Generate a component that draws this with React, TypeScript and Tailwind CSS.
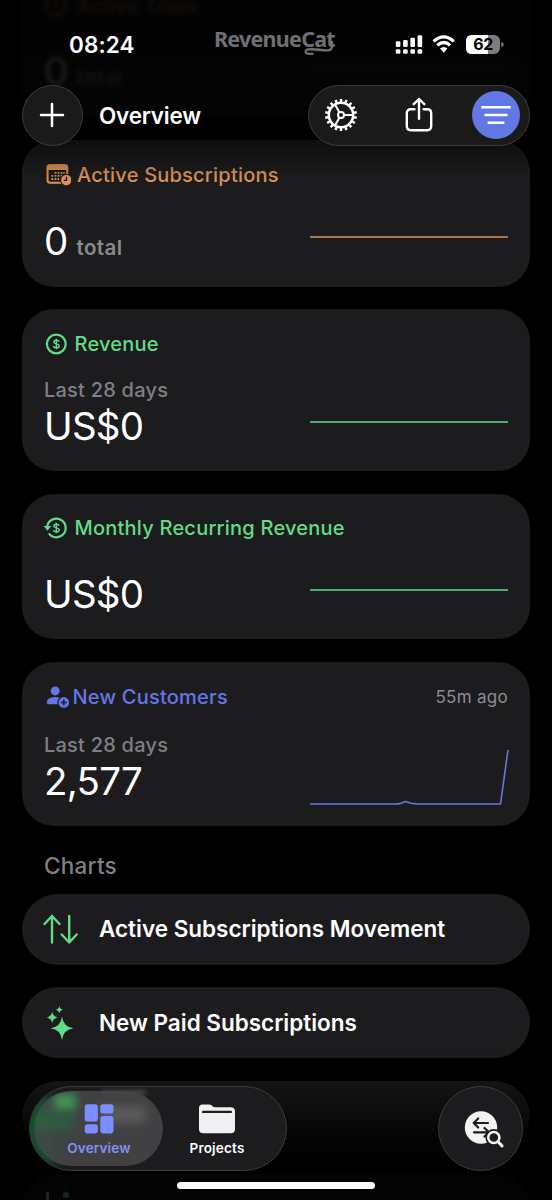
import type { ReactNode } from "react"

const CHART_FLAT = "M0 29H198"
const CHART_CUSTOMERS = "M0 56H85Q89 56 91 55.2L95.5 53.6L101 55.2Q105 56 109 56H190.5L198 2"

function TrialsIcon() {
  return (
    <svg width="23" height="23" viewBox="0 0 23 23" fill="none" stroke="currentColor" strokeWidth="2.2">
      <circle cx="11.5" cy="11.5" r="9.8" />
      <path d="M11.5 6V12H16" />
    </svg>
  )
}

function CalendarClockIcon() {
  return (
    <svg width="27" height="24" viewBox="0 0 27 24" fill="none">
      <rect x="3.6" y="2.2" width="19.6" height="17.6" rx="2.6" stroke="currentColor" strokeWidth="2" />
      <path d="M2.6 4.2Q2.6 1.2 5.6 1.2H21.2Q24.2 1.2 24.2 4.2V7H2.6Z" fill="currentColor" />
      <g fill="currentColor">
        <path d="M10.6 8.9h1.8v1.8h-1.8zM13.6 8.9h1.8v1.8h-1.8zM16.6 8.9h1.8v1.8h-1.8zM19.3 8.9h1.4v1.8h-1.4z" />
        <path d="M7.4 12h1.8v1.8H7.4zM10.6 12h1.8v1.8h-1.8zM13.6 12h1.8v1.8h-1.8zM16.6 12h1.4v1.8h-1.4z" />
        <path d="M7.4 15.1h1.8v1.8H7.4zM10.6 15.1h1.8v1.8h-1.8zM13.6 15.1h1.4v1.8h-1.4z" />
      </g>
      <circle cx="22.3" cy="17" r="6.3" fill="#1a1a1c" />
      <circle cx="22.3" cy="17" r="5.2" fill="currentColor" />
      <path d="M22.5 13.8V17.3H19.8" stroke="#1a1a1c" strokeWidth="1.3" />
    </svg>
  )
}

function DollarIcon() {
  return (
    <svg width="24" height="24" viewBox="0 0 24 24" fill="none" stroke="currentColor">
      <circle cx="12.3" cy="12" r="9.4" strokeWidth="2.2" />
      <path d="M15 9.7Q14.6 8.2 12.3 8.2Q9.8 8.3 9.8 10Q9.9 11.4 12.3 11.9Q15.1 12.4 15.1 14.1Q15 15.8 12.4 15.8Q9.8 15.8 9.5 14.2M12.3 6.7V17.3" strokeWidth="1.4" />
    </svg>
  )
}

function RecurringIcon() {
  return (
    <svg width="24" height="24" viewBox="0 0 24 24" fill="none" stroke="currentColor">
      <path d="M3.2 10.5A9.3 9.3 0 1 1 4.8 17.4" strokeWidth="2.2" />
      <path d="M-.2 10H7.2L3.5 14.7Z" fill="currentColor" stroke="none" />
      <path d="M15 9.7Q14.6 8.2 12.3 8.2Q9.8 8.3 9.8 10Q9.9 11.4 12.3 11.9Q15.1 12.4 15.1 14.1Q15 15.8 12.4 15.8Q9.8 15.8 9.5 14.2M12.3 6.7V17.3" strokeWidth="1.4" />
    </svg>
  )
}

function PersonPlusIcon() {
  return (
    <svg width="26" height="25" viewBox="0 0 26 25" fill="none">
      <circle cx="11.2" cy="5.9" r="4.5" fill="currentColor" />
      <path d="M2.8 17.6Q2.9 12.1 11.2 11.9Q14.4 12 16 13L14.2 19.2H4.4Q2.8 19.2 2.8 17.6Z" fill="currentColor" />
      <circle cx="19.8" cy="17.4" r="6.5" fill="#1c1c1e" />
      <circle cx="19.8" cy="17.4" r="5.3" fill="currentColor" />
      <path d="M19.8 14.5V20.3M16.9 17.4H22.7" stroke="#1c1c1e" strokeWidth="1.5" />
    </svg>
  )
}

type CardProps = {
  title: string
  icon: ReactNode
  iconClass: string
  color: string
  chartColor?: string
  height: string
  value: string
  unit?: string
  period?: string
  updated?: string
  path?: string
  className?: string
  headClass?: string
  bodyClass?: string
}

function MetricCard({
  title,
  icon,
  iconClass,
  color,
  chartColor = color,
  height,
  value,
  unit,
  period,
  updated,
  path = CHART_FLAT,
  className = "",
  headClass = "h-6",
  bodyClass = "mt-[30.5px]",
}: CardProps) {
  return (
    <section className={`shrink-0 rounded-[32px] bg-[#1c1c1e] px-[22px] pt-[22.5px] ${height} ${className}`}>
      <div className={`flex items-center justify-between ${headClass}`}>
        <div className={`flex items-center ${color}`}>
          <span className={`shrink-0 ${iconClass}`}>{icon}</span>
          <h2 className="text-[20px] leading-6 font-medium tracking-[0.22px] whitespace-nowrap">{title}</h2>
        </div>
        {updated && <span className="text-[17px] leading-6 tracking-[0.3px] text-[#8d8d92]">{updated}</span>}
      </div>
      <div className="flex items-start justify-between">
        <div className={bodyClass}>
          {period && <p className="text-[20px] leading-[26px] font-medium tracking-[0.22px] text-[#7f7f84]">{period}</p>}
          <div className="flex items-baseline">
            <span className="text-[38.5px] leading-[46px] tracking-[-0.75px] text-white">{value}</span>
            {unit && <span className="ml-[9px] text-[20.5px] leading-6 font-semibold tracking-[0.4px] text-[#8a8a8f]">{unit}</span>}
          </div>
        </div>
        <svg
          width="198"
          height="58"
          viewBox="0 0 198 58"
          fill="none"
          className={`shrink-0 overflow-visible ${chartColor} ${period ? "mt-[37.5px]" : "mt-[21px]"}`}
        >
          <path d={path} stroke="currentColor" strokeWidth="1.6" strokeLinejoin="round" />
        </svg>
      </div>
    </section>
  )
}

function ChartRow({ label, icon }: { label: string; icon: ReactNode }) {
  return (
    <div className="flex h-[71px] shrink-0 items-center rounded-full bg-[#1c1c1e] pl-[19px]">
      <span className="w-[58px] text-[#62db87]">{icon}</span>
      <span className="text-[22.5px] font-semibold tracking-[-0.01px] whitespace-nowrap text-white">{label}</span>
    </div>
  )
}

function StatusBar() {
  return (
    <div className="flex h-[85px] items-start pl-[69px] text-white">
      <span className="mt-[31px] w-[145px] text-[22.5px] leading-7 font-semibold tracking-[0.1px]">08:24</span>
      <div className="relative mt-[24px] w-[181px] font-['Noto_Sans'] text-[21.5px] leading-[30px] font-bold tracking-[-0.75px] text-[#707073]">
        RevenueCat
        <svg className="absolute top-[15px] left-[88px]" width="36" height="18" viewBox="0 0 36 18" fill="none" stroke="currentColor" strokeWidth="2.4" strokeLinecap="round">
          <path d="M30 3V7Q30 11.2 26 11.4Q22 11.5 17 10.8Q11 9.9 6 10.4Q3.6 10.9 3.7 12.9Q4 15 7.5 14.9H10.5" />
        </svg>
      </div>
      <svg width="110" height="24" viewBox="0 0 110 24" className="mt-[33px]" fill="none">
        <g fill="white">
          <rect x=".8" y="8.3" width="4.6" height="5.6" rx="1.2" />
          <rect x="8.1" y="7" width="4.6" height="6.9" rx="1.2" />
          <rect x="15.4" y="4.8" width="4.6" height="9.1" rx="1.2" />
          <rect x="22.6" y="2.2" width="4.6" height="11.7" rx="1.2" />
          <rect x=".8" y="16.2" width="4.6" height="4.6" rx="1.3" />
          <rect x="8.1" y="16.2" width="4.6" height="4.6" rx="1.3" />
          <rect x="15.4" y="16.2" width="4.6" height="4.6" rx="1.3" />
          <rect x="22.6" y="16.2" width="4.6" height="4.6" rx="1.3" />
        </g>
        <g stroke="white" strokeWidth="3.2">
          <path d="M38.6 8.4Q48.7-.8 58.8 8.4" />
          <path d="M42.3 12.4Q48.7 6.6 55.1 12.4" />
        </g>
        <path d="M45 15.6Q48.7 12.4 52.4 15.6L48.7 19.8Z" fill="white" />
        <rect x="71" y="2" width="34" height="19" rx="6" fill="#7d7d7f" />
        <path d="M77 2H93V21H77Q71 21 71 15V8Q71 2 77 2Z" fill="white" />
        <path d="M106.4 8.7Q108.6 9.4 108.6 11.5Q108.6 13.6 106.4 14.3Z" fill="#7d7d7f" />
      </svg>
      <span className="mt-[35px] -ml-[39px] w-[34px] text-center text-[16px] leading-[19px] font-bold tracking-[-0.4px] text-black">62</span>
    </div>
  )
}

const TEETH = Array.from({ length: 18 }, (_, i) => i * 20 + 10)

function GearIcon() {
  return (
    <svg width="34" height="34" viewBox="-17 -17 34 34" fill="none" stroke="currentColor">
      <circle r="12.2" strokeWidth="2.5" />
      {TEETH.map((angle) => (
        <path key={angle} d="M12.5 0H16" strokeWidth="2.4" transform={`rotate(${angle})`} />
      ))}
      <circle r="3" strokeWidth="2" />
      <path d="M3.5 0H12M-1.8 -3L-6 -10.4M-1.8 3L-6 10.4" strokeWidth="2.1" />
    </svg>
  )
}

function ShareIcon() {
  return (
    <svg width="30" height="36" viewBox="0 0 30 36" fill="none" stroke="currentColor" strokeWidth="2.4" strokeLinecap="round" strokeLinejoin="round">
      <path d="M10.5 12.3H6.8Q2.8 12.3 2.8 16.3V29Q2.8 33.2 6.8 33.2H23.2Q27.2 33.2 27.2 29V16.3Q27.2 12.3 23.2 12.3H19.5" />
      <path d="M15 21.8V2.2M9.7 7.2L15 2L20.3 7.2" />
    </svg>
  )
}

export default function App() {
  return (
    <div className="relative h-[1200px] w-[552px] overflow-hidden bg-black font-['Inter','Liberation_Sans',sans-serif]">
      {/* Scrolled content */}
      <main className="-mt-[29px] flex flex-col px-[22px]">
        <MetricCard
          title="Active Trials"
          icon={<TrialsIcon />}
          iconClass="w-[33px]"
          color="text-[#de9255]"
          chartColor="text-[#e04040]"
          height="h-[146px]"
          value="0"
          unit="total"
          className="opacity-70 blur-[2px]"
        />
        <MetricCard
          title="Active Subscriptions"
          icon={<CalendarClockIcon />}
          iconClass="w-[33px]"
          color="text-[#de9255]"
          height="h-[146.5px]"
          value="0"
          unit="total"
          className="mt-[23px]"
          bodyClass="mt-[31.5px]"
        />
        <MetricCard
          title="Revenue"
          icon={<DollarIcon />}
          iconClass="w-[30.5px]"
          color="text-[#62db87]"
          height="h-[162px]"
          period="Last 28 days"
          value="US$0"
          className="mt-[22.5px]"
          bodyClass="mt-[21px]"
        />
        <MetricCard
          title="Monthly Recurring Revenue"
          icon={<RecurringIcon />}
          iconClass="w-[30.5px]"
          color="text-[#62db87]"
          height="h-[145.5px]"
          value="US$0"
          className="mt-[22.5px]"
        />
        <MetricCard
          title="New Customers"
          icon={<PersonPlusIcon />}
          iconClass="w-[28.5px]"
          color="text-[#6676e6]"
          height="h-[164.5px]"
          period="Last 28 days"
          value="2,577"
          updated="55m ago"
          path={CHART_CUSTOMERS}
          className="mt-[22.5px]"
          headClass="h-[26px]"
          bodyClass="mt-[21.5px]"
        />

        <h2 className="mt-[26px] pl-[22px] text-[22.5px] leading-7 font-medium tracking-[0.25px] text-[#7f7f85]">Charts</h2>
        <div className="mt-[13.5px] flex flex-col gap-[22.5px]">
          <ChartRow
            label="Active Subscriptions Movement"
            icon={
              <svg width="38" height="32" viewBox="0 0 38 32" fill="none" stroke="currentColor" strokeWidth="2.4" strokeLinecap="round" strokeLinejoin="round">
                <path d="M11 29.5V3M3.5 11L11 3L18.5 11M28.2 3V29.5M20.7 21.5L28.2 29.5L35.7 21.5" />
              </svg>
            }
          />
          <ChartRow
            label="New Paid Subscriptions"
            icon={
              <svg width="38" height="36" viewBox="0 0 38 36" fill="currentColor">
                <path d="M21 11.5Q22.3 22 32.5 23.2Q22.3 24.4 21 35Q19.7 24.4 9.5 23.2Q19.7 22 21 11.5Z" />
                <path d="M11.2 6.8Q12 11.6 16.8 12.5Q12 13.4 11.2 18.2Q10.4 13.4 5.6 12.5Q10.4 11.6 11.2 6.8Z" />
                <path d="M18.3 1Q18.8 4.1 22 4.7Q18.8 5.3 18.3 8.4Q17.8 5.3 14.6 4.7Q17.8 4.1 18.3 1Z" />
              </svg>
            }
          />
          <div className="h-[71px] rounded-full bg-[#1c1c1e]" />
          <div className="flex h-[71px] gap-[14px] rounded-full bg-[#121213] pt-[18px] pl-[24px]">
            <span className="h-6 w-[3px] bg-[#62db87]" />
            <span className="size-[6px] rounded-full bg-[#62db87]" />
          </div>
        </div>
      </main>

      {/* Scroll edge fades */}
      <div className="absolute inset-x-0 top-0 h-[180px] bg-linear-to-b from-black/85 via-black/80 via-65% to-transparent" />
      <div className="absolute inset-x-0 bottom-0 h-[150px] bg-linear-to-b from-transparent via-black/85 via-60% to-black/80" />

      {/* Top bar */}
      <header className="absolute inset-x-0 top-0">
        <StatusBar />
        <div className="flex items-center px-[22px]">
          <button className="flex size-[60.5px] items-center justify-center rounded-full border border-[#3c3c3d] bg-[#1a1a1b] text-white">
            <svg width="26" height="26" viewBox="0 0 26 26" fill="none" stroke="currentColor" strokeWidth="2.5" strokeLinecap="round">
              <path d="M13 2V24M2 13H24" />
            </svg>
          </button>
          <h1 className="mt-px ml-[16.5px] text-[22.5px] font-semibold tracking-[-0.2px] text-white">Overview</h1>
          <div className="ml-auto flex h-[60.5px] w-[222.5px] items-center rounded-full border border-[#3c3c3d] bg-[#1a1a1b] pl-[15.5px] text-white">
            <GearIcon />
            <span className="ml-[45.5px]">
              <ShareIcon />
            </span>
            <span className="mr-[9px] ml-auto flex size-[48px] items-center justify-center rounded-full bg-[#6278e4]">
              <svg width="32" height="22" viewBox="0 0 32 22" fill="none" stroke="currentColor" strokeWidth="2.5" strokeLinecap="round">
                <path d="M2.3 3.3H29.7M5.5 11H26.5M8.7 18.7H23.3" />
              </svg>
            </span>
          </div>
        </div>
      </header>

      {/* Tab bar */}
      <footer className="absolute inset-x-0 bottom-0 flex h-[114px] flex-wrap content-start items-start justify-between px-[29px] text-white">
        <nav className="relative flex h-[84.5px] w-[258px] items-center overflow-hidden rounded-full border border-[#3b3b3d] bg-[#1c1c1e] pl-1">
          <span className="absolute top-2 -left-3 h-[72px] w-[36px] bg-[#107038]/60 blur-[6px]" />
          <span className="absolute top-[3px] left-[72px] h-[5px] w-[44px] bg-[#707072]/50 blur-[2px]" />
          <div className="relative flex h-[75px] w-[129px] flex-col items-center overflow-hidden rounded-full bg-[#48484a]/85">
            <span className="absolute top-[3px] left-[20px] h-[16px] w-[22px] bg-[#43a053]/90 blur-[4px]" />
            <span className="absolute top-[20px] left-0 h-[20px] w-[40px] bg-[#207040]/50 blur-[4px]" />
            <span className="absolute top-[15px] left-[66px] h-[17px] w-[46px] bg-[#808082]/40 blur-[5px]" />
            <svg width="30" height="30" viewBox="0 0 30 30" className="relative mt-[13px]" fill="#7b8dff">
              <rect x=".7" y=".3" width="13.2" height="17.2" rx="2.8" />
              <rect x="16.3" y=".3" width="13.2" height="9.2" rx="2.8" />
              <rect x=".7" y="20.2" width="13.2" height="9.2" rx="2.8" />
              <rect x="16.3" y="12.1" width="13.2" height="17.3" rx="2.8" />
            </svg>
            <span className="relative mt-[5px] ml-px text-[13.5px] leading-[18px] font-semibold tracking-[0.15px] text-[#8290f4]">Overview</span>
          </div>
          <div className="flex h-[75px] w-[108px] flex-col items-center">
            <svg width="36" height="30" viewBox="0 0 36 30" className="mt-[13px]" fill="#f0f0f2">
              <path d="M0 4Q0 .4 3.6 .4H10Q11.6 .4 12.8 1.5L14.2 2.7Q15 3.3 16.3 3.3H31.5Q36 3.3 36 7.5V25Q36 29.3 31.7 29.3H4.3Q0 29.3 0 25Z" />
              <path d="M4.3 6.7H31.7Q33 6.7 33 7.9Q33 9.1 31.7 9.1H3V8Q3 6.7 4.3 6.7Z" fill="#1c1c1e" />
            </svg>
            <span className="mt-[5px] text-[13.5px] leading-[18px] font-semibold tracking-[0.2px]">Projects</span>
          </div>
        </nav>
        <button className="flex size-[85px] items-center justify-center rounded-full border border-[#3b3b3d] bg-[#1c1c1e]">
          <svg width="40" height="38" viewBox="0 0 40 38" className="mt-px ml-[6px]" fill="none" strokeLinecap="round" strokeLinejoin="round">
            <circle cx="17" cy="17.5" r="16.2" fill="#f2f2f4" />
            <g stroke="#1c1c1e" strokeWidth="2.2">
              <path d="M24 13H10M14.2 8.5L9.7 13L14.2 17.5" />
              <path d="M10 22.3H24.5M20.5 18L25 22.3L20.5 26.5" />
            </g>
            <circle cx="29.8" cy="27.5" r="8.4" fill="#1c1c1e" />
            <path d="M34 32L38 36" stroke="#1c1c1e" strokeWidth="5" />
            <circle cx="29.8" cy="27.5" r="5.6" stroke="#f2f2f4" strokeWidth="2.5" />
            <path d="M34 31.7L38 35.9" stroke="#f2f2f4" strokeWidth="3" />
          </svg>
        </button>
        <div className="mx-auto mt-[11px] h-[7px] w-[198px] rounded-full bg-white" />
      </footer>
    </div>
  )
}
